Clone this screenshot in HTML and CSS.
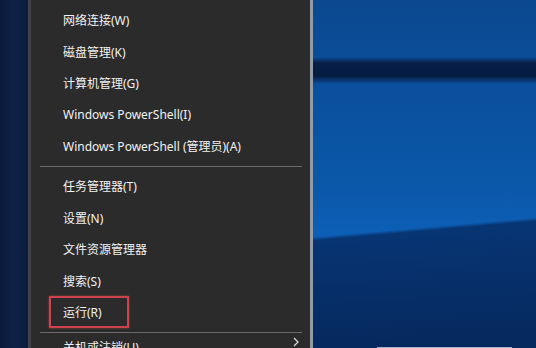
FILE: index.html
```html
<!DOCTYPE html>
<html lang="zh-CN">

<head>
    <meta charset="UTF-8">
    <meta name="viewport" content="width=device-width, initial-scale=1.0">
    <title>Win+X 菜单</title>
    <link rel="stylesheet" href="styles.css">
</head>

<body>
    <div class="desktop">
        <div class="desk-left"></div>
        <div class="menu">
            <ul class="group">
                <li class="item">网络连接(W)</li>
                <li class="item">磁盘管理(K)</li>
                <li class="item">计算机管理(G)</li>
                <li class="item">Windows PowerShell(I)</li>
                <li class="item">Windows PowerShell (管理员)(A)</li>
            </ul>
            <div class="sep"></div>
            <ul class="group">
                <li class="item">任务管理器(T)</li>
                <li class="item">设置(N)</li>
                <li class="item">文件资源管理器</li>
                <li class="item">搜索(S)</li>
                <li class="item marked">运行(R)</li>
            </ul>
            <div class="sep"></div>
            <ul class="group">
                <li class="item sub">关机或注销(U)
                    <svg class="chevron" width="8" height="10" viewBox="0 0 8 10">
                        <path d="M2 1 L6 5 L2 9" fill="none" stroke="#d8d8d8" stroke-width="1.3" />
                    </svg>
                </li>
            </ul>
        </div>
        <div class="desk-right">
            <div class="taskbar-edge"></div>
        </div>
    </div>
</body>

</html>
```

FILE: styles.css
```css
html,
body {
    margin: 0;
    padding: 0;
    height: 348px;
    overflow: hidden;
}

body {
    font-family: 'Noto Sans', 'Noto Sans CJK SC', sans-serif;
    background: #0b1d42;
}

.desktop {
    display: flex;
    height: 348px;
}

.desk-left {
    width: 28px;
    background: linear-gradient(90deg, #0a1a3b, #0e2349 50%, #0a1b3d);
}

.menu {
    width: 279px;
    background: #2b2b2b;
    border-left: 3px solid #3f4249;
    border-right: 3px solid #959ba4;
    padding-top: 4.25px;
}

.group {
    list-style: none;
    margin: 0;
    padding: 0;
}

.item {
    position: relative;
    height: 31.5px;
    display: flex;
    align-items: center;
    padding-left: 32px;
    font-size: 12px;
    color: #f2f2f2;
    white-space: nowrap;
}

.marked::after {
    content: "";
    position: absolute;
    left: 18px;
    top: 0;
    width: 76px;
    height: 28px;
    border: 2px solid #cf434c;
    box-shadow: 0 0 2px rgba(230, 80, 90, 0.6);
}

.sub {
    margin-top: -5px;
}

.chevron {
    position: absolute;
    right: 10px;
    top: 6px;
}

.sep {
    height: 1px;
    background: #6a6a6a;
    margin: 4px 8px 3.5px 9px;
}

.desk-right {
    flex: 1;
    position: relative;
    background:
        linear-gradient(175deg, rgba(0, 0, 0, 0) 0, rgba(0, 0, 0, 0) 64.5%, rgba(4, 25, 70, 0.6) 65.5%, rgba(3, 20, 60, 0.65) 100%),
        linear-gradient(180deg, #0b4890 0, #0b4d98 57px, #071f47 63px, #061c40 76px, #0a4f9c 84px, #0b57a8 180px, #0c5fb6 232px, #0a4f9c 348px);
}

.taskbar-edge {
    position: absolute;
    left: 64px;
    bottom: 0;
    width: 135px;
    height: 1px;
    background: #a9b1bd;
}
```
